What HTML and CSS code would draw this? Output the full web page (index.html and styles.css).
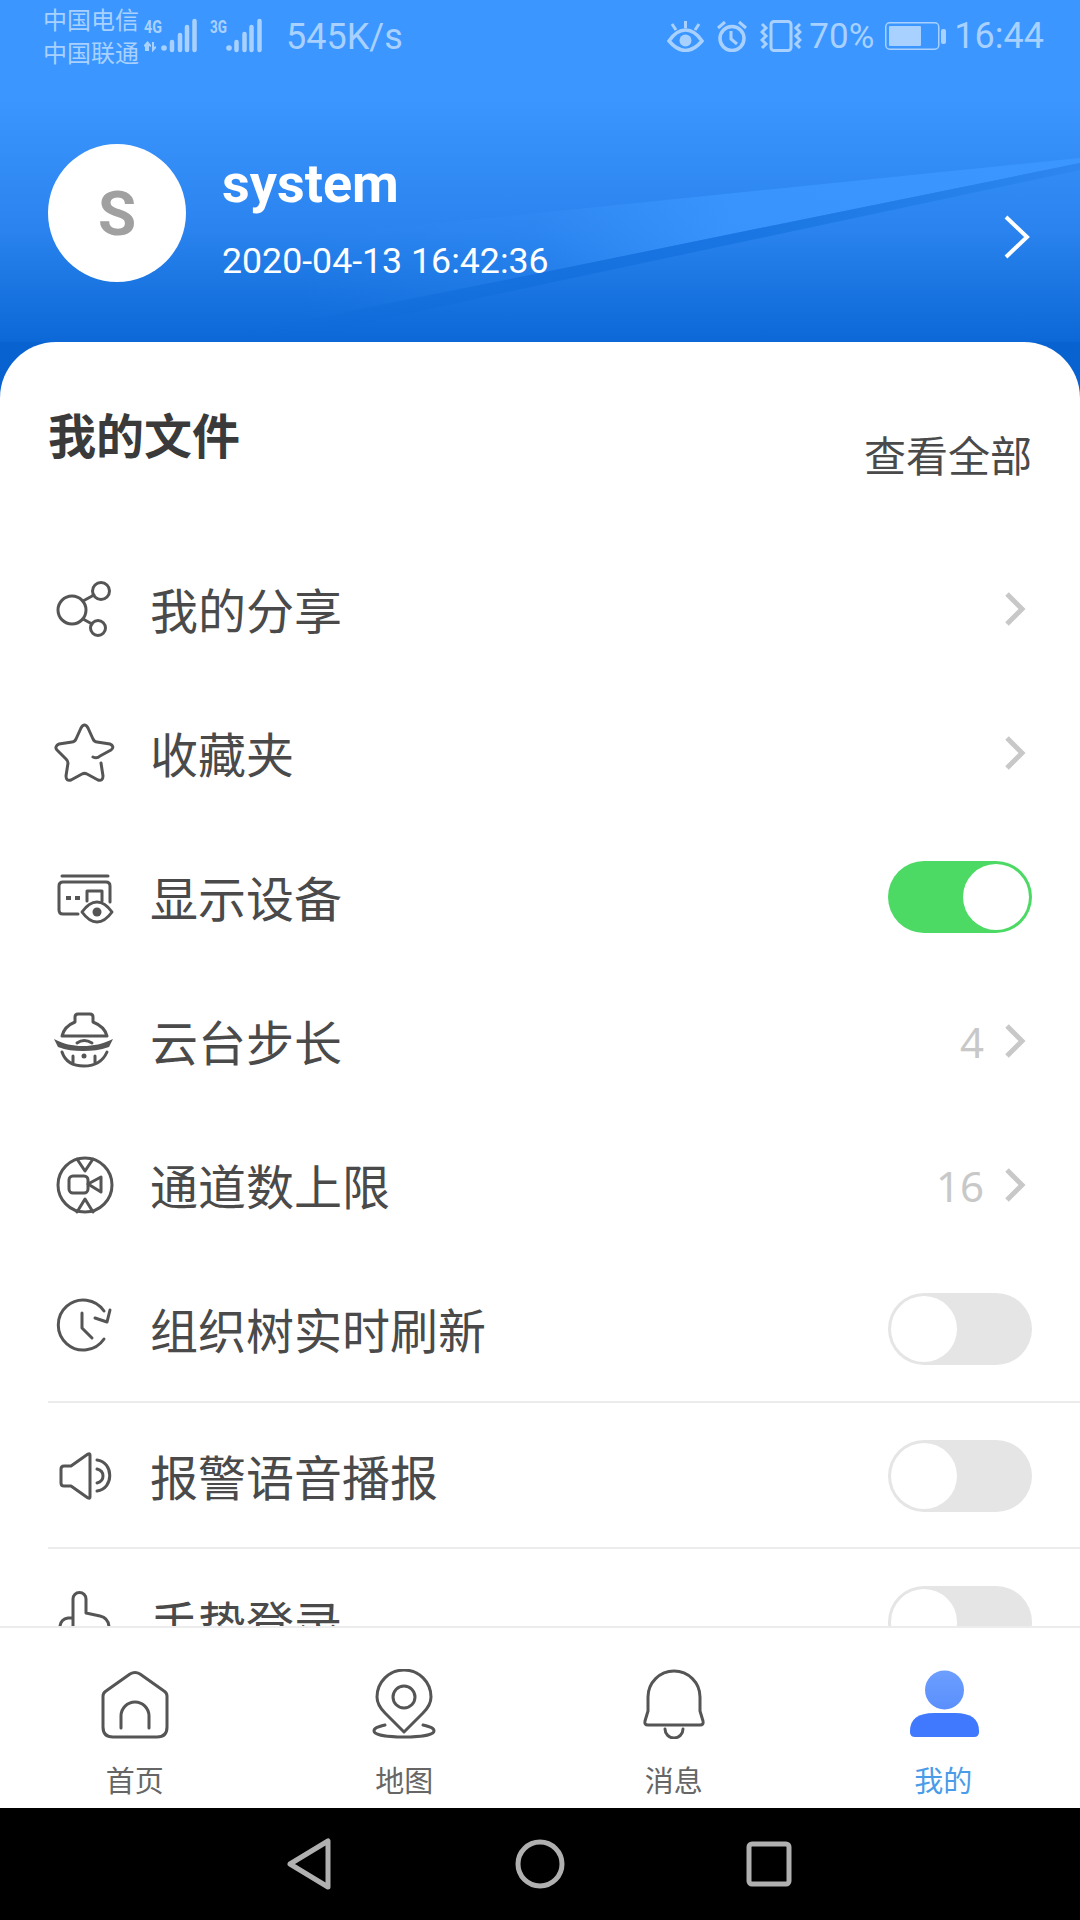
FILE: index.html
```html
<!DOCTYPE html>
<html lang="zh-CN">
<head>
    <meta charset="UTF-8">
    <meta name="viewport" content="width=device-width, initial-scale=1.0">
    <title>我的</title>
    <link rel="stylesheet" href="styles.css">
</head>
<body>
    <div class="screen">
        <header class="header">
            <svg class="streaks" width="1080" height="342" viewBox="0 0 1080 342">
                <defs>
                    <linearGradient id="lightFade" x1="0" x2="1" y1="0" y2="0">
                        <stop offset="0" stop-color="#3c96ff" stop-opacity="0"/>
                        <stop offset="0.3" stop-color="#3c96ff" stop-opacity="0.15"/>
                        <stop offset="0.55" stop-color="#3c96ff" stop-opacity="0.85"/>
                        <stop offset="1" stop-color="#3c96ff"/>
                    </linearGradient>
                    <linearGradient id="darkFade" x1="0" x2="1" y1="0" y2="0">
                        <stop offset="0" stop-color="#0b68d6" stop-opacity="0"/>
                        <stop offset="0.35" stop-color="#0f6cd9" stop-opacity="0.6"/>
                        <stop offset="0.6" stop-color="#1a76e2"/>
                        <stop offset="1" stop-color="#2e87f0"/>
                    </linearGradient>
                </defs>
                <polygon points="1080,158 300,237 300,322 540,273 1080,163" fill="url(#lightFade)"/>
                <polygon points="1080,163 1080,170 540,285 280,342 270,326 540,273" fill="url(#darkFade)"/>
            </svg>
            <div class="status">
                <div class="carriers">
                    <span>中国电信</span>
                    <span>中国联通</span>
                </div>
                <svg class="signal-a" width="53" height="34" viewBox="0 0 53 34">
                    <text x="0" y="14" class="net" textLength="18" lengthAdjust="spacingAndGlyphs">4G</text>
                    <path d="M1 32V27L0 28V26L3.500 22L7 26V28L5 27V32zM10 23V28L12 27L12 29L8.500 33L8 33V23z" fill="#a9d1ff"/>
                    <circle cx="20" cy="29" r="2.800" fill="#a9d1ff"/>
                    <path class="bars" d="M28 23V31M36 16V31M43 8V31M50.500 2V31"/>
                </svg>
                <svg class="signal-b" width="52" height="34" viewBox="0 0 52 34">
                    <text x="0" y="14" class="net" textLength="17" lengthAdjust="spacingAndGlyphs">3G</text>
                    <circle cx="19" cy="29" r="2.800" fill="#a9d1ff"/>
                    <path class="bars" d="M26.500 23V31M34.500 15V31M41.500 8V31M49.500 2V31"/>
                </svg>
                <span class="speed">545K/s</span>
                <div class="status-right">
                    <svg width="37" height="32" viewBox="0 0 37 32">
                        <path d="M2 21C8 12 13 10 18.500 10S29 12 35 21C29 28 24 30.500 18.500 30.500S8 28 2 21Z" fill="none" stroke="#a9d1ff" stroke-width="3.500"/>
                        <circle cx="18.500" cy="20.500" r="6" fill="#a9d1ff"/>
                        <path d="M18.500 1V8M5 4L9 10M32 4L28 10" stroke="#a9d1ff" stroke-width="3" fill="none"/>
                    </svg>
                    <svg width="32" height="32" viewBox="0 0 32 32">
                        <circle cx="16" cy="18.500" r="12" fill="none" stroke="#a9d1ff" stroke-width="3.500"/>
                        <path d="M15 11V19L21 24M2 8L9 2M30 8L23 2" fill="none" stroke="#a9d1ff" stroke-width="3"/>
                    </svg>
                    <svg width="42" height="32" viewBox="0 0 42 32">
                        <rect x="11" y="1.500" width="20" height="29" rx="3" fill="none" stroke="#a9d1ff" stroke-width="3"/>
                        <path d="M2 4L6 8L2 12L6 16L2 20L6 24L2 28M40 4L36 8L40 12L36 16L40 20L36 24L40 28" fill="none" stroke="#a9d1ff" stroke-width="3"/>
                    </svg>
                    <span class="battery-pct">70%</span>
                    <svg class="battery" width="61" height="28" viewBox="0 0 61 28">
                        <rect x="0.750" y="0.750" width="53" height="26.500" rx="4" fill="none" stroke="#a9d1ff" stroke-width="1.500"/>
                        <rect x="4" y="4" width="32" height="20" rx="1" fill="#a9d1ff"/>
                        <rect x="56" y="7" width="5" height="15" rx="2" fill="#a9d1ff"/>
                    </svg>
                    <span class="clock">16:44</span>
                </div>
            </div>
            <div class="profile">
                <div class="avatar">S</div>
                <div class="profile-info">
                    <div class="username">system</div>
                    <div class="login-time">2020-04-13 16:42:36</div>
                </div>
                <svg class="profile-arrow" width="26" height="44" viewBox="0 0 26 44">
                    <path d="M2 2L23 22L2 42" fill="none" stroke="#fff" stroke-width="4"/>
                </svg>
            </div>
        </header>

        <main class="content">
            <section class="card">
                <div class="card-head">
                    <h2 class="card-title">我的文件</h2>
                    <span class="card-link">查看全部</span>
                </div>

                <div class="row">
                    <svg class="row-icon" width="64" height="64" viewBox="0 0 64 64">
                        <circle cx="20" cy="33" r="14"/>
                        <circle cx="49" cy="14" r="8.500"/>
                        <circle cx="46" cy="51" r="7.500"/>
                        <path d="M31 24L42 18M31 42L40 47"/>
                    </svg>
                    <span class="row-label">我的分享</span>
                    <svg class="chevron" width="27" height="36" viewBox="0 0 27 36"><path d="M2 3L17 18L2 33"/></svg>
                </div>

                <div class="row">
                    <svg class="row-icon" width="64" height="64" viewBox="0 0 64 64">
                        <path d="M41 36c2 1 5 1 7-1l11-6c3-2 2-5-1-6l-13-2c-2 0-3-1-4-3l-5-11c-2-4-5-4-7 0l-5 11c-1 2-2 3-4 3l-13 2c-3 1-4 4-2 6l9 9c1 1 2 3 2 4l-2 13c0 4 2 5 5 4l11-6c2-1 3-1 5 0l11 6c3 1 5 0 5-4l-2-13"/>
                    </svg>
                    <span class="row-label">收藏夹</span>
                    <svg class="chevron" width="27" height="36" viewBox="0 0 27 36"><path d="M2 3L17 18L2 33"/></svg>
                </div>

                <div class="row">
                    <svg class="row-icon" width="64" height="64" viewBox="0 0 64 64">
                        <path d="M10 11H56M26 49H11Q7 49 7 45V21Q7 17 11 17H54Q58 17 58 21V37M35 36V26H50V36"/>
                        <path class="solid" d="M14 31h5v4h-5zM23 31h5v4h-5z"/>
                        <path d="M30 47C35 40 40 37 45 37S55 40 60 47C55 54 50 57 45 57S35 54 30 47Z"/>
                        <circle class="solid" cx="45" cy="47" r="4.500"/>
                    </svg>
                    <span class="row-label">显示设备</span>
                    <span class="switch switch-on"><span class="knob"></span></span>
                </div>

                <div class="row">
                    <svg class="row-icon" width="64" height="64" viewBox="0 0 64 64">
                        <path d="M10 27C12 19 18 15 23 13V8Q23 5 26 5H38Q41 5 41 8V13C46 15 53 19 55 27Z"/>
                        <path class="solid" d="M2 30C12 35 20 37 31 37S50 35 61 30L57 38C48 41 40 42 31 42S14 41 6 38Z"/>
                        <path d="M25 34Q32 29 40 34M10 43C13 52 21 57 32 57S51 52 55 43M21 47V54M43 47V54"/>
                        <circle class="solid" cx="32" cy="47" r="2.500"/>
                    </svg>
                    <span class="row-label">云台步长</span>
                    <span class="row-value">4</span>
                    <svg class="chevron" width="27" height="36" viewBox="0 0 27 36"><path d="M2 3L17 18L2 33"/></svg>
                </div>

                <div class="row">
                    <svg class="row-icon" width="64" height="64" viewBox="0 0 64 64">
                        <circle cx="33" cy="32" r="27"/>
                        <path d="M25 6L33 18L41 6M25 59L33 46L41 59"/>
                        <rect x="17" y="23" width="19" height="17" rx="4"/>
                        <path d="M36 31L49 24V39Z"/>
                    </svg>
                    <span class="row-label">通道数上限</span>
                    <span class="row-value">16</span>
                    <svg class="chevron" width="27" height="36" viewBox="0 0 27 36"><path d="M2 3L17 18L2 33"/></svg>
                </div>

                <div class="row">
                    <svg class="row-icon" width="64" height="64" viewBox="0 0 64 64">
                        <path d="M52 14A25 25 0 1 0 52 42M43 21L55 25L58 13M30 16V31L40 41"/>
                    </svg>
                    <span class="row-label">组织树实时刷新</span>
                    <span class="switch"><span class="knob"></span></span>
                </div>

                <div class="row row-line">
                    <svg class="row-icon" width="64" height="64" viewBox="0 0 64 64">
                        <path d="M9 25Q9 22 12 22H19L36 10Q38 9 38 11V53Q38 55 36 54L19 42H12Q9 42 9 39Z"/>
                        <path d="M45 16C62 18 62 45 45 47M45 25C53 27 53 37 45 39"/>
                    </svg>
                    <span class="row-label">报警语音播报</span>
                    <span class="switch"><span class="knob"></span></span>
                </div>

                <div class="row row-line">
                    <svg class="row-icon" width="64" height="64" viewBox="0 0 64 64">
                        <path d="M21 44V9A6.500 6.500 0 0 1 34 9V23L48 26Q57 28 57 38V60M21 28H16Q9 29 8 36V60"/>
                    </svg>
                    <span class="row-label">手势登录</span>
                    <span class="switch"><span class="knob"></span></span>
                </div>
            </section>
        </main>

        <nav class="tabbar">
            <div class="tab">
                <svg class="tab-icon" width="68" height="70" viewBox="0 0 68 70">
                    <path d="M2 27Q2 24 5 22L29 5Q34 2 39 5L63 22Q66 24 66 27V58Q66 68 56 68H12Q2 68 2 58Z"/>
                    <path d="M20 59V47A14 14 0 0 1 48 47V59"/>
                </svg>
                <span class="tab-label">首页</span>
            </div>
            <div class="tab">
                <svg class="tab-icon" width="68" height="70" viewBox="0 0 68 70">
                    <path d="M34 63L15 44C9 38 7 34 7 28A27 27 0 0 1 61 28C61 34 59 38 53 44Z"/>
                    <circle cx="34" cy="28" r="11"/>
                    <path d="M15 56C7 58 4 59 4 62C4 66 18 68 34 68S64 66 64 62C64 59 61 58 53 56"/>
                </svg>
                <span class="tab-label">地图</span>
            </div>
            <div class="tab">
                <svg class="tab-icon" width="68" height="70" viewBox="0 0 68 70">
                    <path d="M8 56H60Q64 56 63 52L60 42V28A26 26 0 0 0 8 28V42L5 52Q4 56 8 56Z"/>
                    <path d="M25 60A9 9 0 0 0 43 60"/>
                </svg>
                <span class="tab-label">消息</span>
            </div>
            <div class="tab tab-active">
                <svg class="tab-icon" width="69" height="70" viewBox="0 0 69 70">
                    <defs>
                        <linearGradient id="personTop" x1="0" x2="0" y1="0" y2="1">
                            <stop offset="0" stop-color="#6d9fff"/>
                            <stop offset="1" stop-color="#5a8ffc"/>
                        </linearGradient>
                    </defs>
                    <circle cx="34.500" cy="21" r="19.500" fill="url(#personTop)"/>
                    <path d="M0 62Q0 44 24 44H45Q69 44 69 62V63Q69 68 64 68H5Q0 68 0 63Z" fill="#4079fd"/>
                </svg>
                <span class="tab-label">我的</span>
            </div>
        </nav>

        <div class="navbar">
            <svg width="50" height="52" viewBox="0 0 50 52">
                <path d="M5 26L43 3V49Z"/>
            </svg>
            <svg width="50" height="52" viewBox="0 0 50 52">
                <circle cx="25" cy="26" r="22"/>
            </svg>
            <svg width="50" height="52" viewBox="0 0 50 52">
                <rect x="4" y="6" width="40" height="40" rx="3"/>
            </svg>
        </div>
    </div>
</body>
</html>
```

FILE: styles.css
```css
* {
    box-sizing: border-box;
}
body {
    margin: 0;
    font-family: Roboto, "Noto Sans CJK SC", sans-serif;
    background-color: #fff;
}
.screen {
    width: 1080px;
    height: 1920px;
    display: flex;
    flex-direction: column;
    overflow: hidden;
}

/* top blue area */
.header {
    position: relative;
    height: 342px;
    flex-shrink: 0;
    background: linear-gradient(#3c96ff 0, #3c96ff 100px, #2a83ee 230px, #0b68d6 342px);
}
.streaks {
    position: absolute;
    left: 0;
    top: 0;
}
.status {
    position: relative;
    height: 76px;
    padding: 0 36px 0 43px;
    display: flex;
    align-items: center;
    color: #a9d1ff;
}
.carriers {
    display: flex;
    flex-direction: column;
    font-size: 24px;
    line-height: 33px;
    width: 101px;
    white-space: nowrap;
}
.signal-a {
    margin: -4px 0 0 0;
    overflow: visible;
}
.signal-b {
    margin: -4px 0 0 13px;
    overflow: visible;
}
.bars {
    fill: none;
    stroke: #a9d1ff;
    stroke-width: 4.500;
    stroke-linecap: round;
}
.net {
    font-size: 18px;
    font-weight: 700;
    fill: #a9d1ff;
}
.speed {
    margin-left: 24px;
    font-size: 36px;
    margin-top: -2px;
}
.status-right {
    margin-left: auto;
    display: flex;
    align-items: center;
    margin-top: -4px;
}
.status-right svg {
    margin-right: 12px;
}
.status-right svg:nth-child(3) {
    margin-right: 7px;
}
.status-right .battery {
    margin-right: 8px;
}
.battery-pct {
    font-size: 35px;
    margin-right: 11px;
}
.clock {
    font-size: 36px;
}
.profile {
    position: relative;
    margin-top: 68px;
    padding: 0 50px 0 48px;
    display: flex;
    align-items: flex-start;
}
.avatar {
    width: 138px;
    height: 138px;
    border-radius: 50%;
    background: #fff;
    color: #a0a0a0;
    font-size: 62px;
    font-weight: 700;
    display: flex;
    align-items: center;
    justify-content: center;
}
.profile-info {
    margin: 5px 0 0 36px;
    color: #fff;
}
.username {
    font-size: 54px;
    font-weight: 700;
    line-height: 70px;
}
.login-time {
    margin-top: 17px;
    font-size: 35.700px;
    line-height: 50px;
}
.profile-arrow {
    margin: 71px 0 0 auto;
}

/* white card */
.content {
    flex: 1;
    min-height: 0;
    background: #0862d0;
}
.card {
    height: 100%;
    background: #fff;
    border-radius: 56px 56px 0 0;
    overflow: hidden;
}
.card-head {
    height: 195px;
    padding: 66px 48px 0;
    display: flex;
    justify-content: space-between;
    align-items: flex-start;
}
.card-title {
    margin: 0;
    font-size: 48px;
    line-height: 60px;
    font-weight: 700;
    color: #3a3a3a;
}
.card-link {
    margin-top: 20px;
    font-size: 42px;
    line-height: 60px;
    color: #4a4a4a;
}
.row {
    height: 144px;
    margin-left: 48px;
    padding: 0 48px 0 4px;
    display: flex;
    align-items: center;
}
.row-line {
    height: 146px;
    padding-top: 2px;
    border-top: 2px solid #ececec;
}
.row-icon {
    flex-shrink: 0;
    fill: none;
    stroke: #555;
    stroke-width: 3;
    stroke-linecap: round;
    stroke-linejoin: round;
}
.row-icon .solid {
    fill: #555;
    stroke: none;
}
.row-label {
    margin: 0 0 3px 34px;
    font-size: 48px;
    color: #4a4a4a;
}
.row-value {
    margin-left: auto;
    margin-right: 21px;
    font-family: "Noto Sans", sans-serif;
    font-size: 42px;
    color: #c8c8c8;
}
.row-value + .chevron {
    margin-left: 0;
}
.chevron {
    margin-left: auto;
    fill: none;
    stroke: #c8c8c8;
    stroke-width: 5;
}
.switch {
    margin-left: auto;
    width: 144px;
    height: 72px;
    border-radius: 36px;
    background: #e5e5e5;
    display: flex;
    padding: 3px;
}
.switch-on {
    background: #4cd964;
    justify-content: flex-end;
}
.knob {
    width: 66px;
    height: 66px;
    border-radius: 50%;
    background: #fff;
}

/* bottom tabs */
.tabbar {
    height: 182px;
    flex-shrink: 0;
    border-top: 2px solid #ececec;
    background: #fff;
    padding-right: 2px;
    display: grid;
    grid-template-columns: repeat(4, 1fr);
}
.tab {
    padding-top: 41px;
    display: flex;
    flex-direction: column;
    align-items: center;
}
.tab-icon {
    fill: none;
    stroke: #555;
    stroke-width: 3;
    stroke-linecap: round;
    stroke-linejoin: round;
}
.tab-active .tab-icon {
    stroke: none;
    margin-left: 2px;
}
.tab-label {
    margin-top: 23px;
    font-size: 29px;
    line-height: 40px;
    color: #666;
}
.tab-active .tab-label {
    color: #4a9be8;
}
.navbar {
    height: 112px;
    flex-shrink: 0;
    background: #000;
    display: flex;
    align-items: center;
    justify-content: center;
    gap: 180px;
}
.navbar svg {
    fill: none;
    stroke: #b0b0b0;
    stroke-width: 5;
    stroke-linejoin: round;
}
```
